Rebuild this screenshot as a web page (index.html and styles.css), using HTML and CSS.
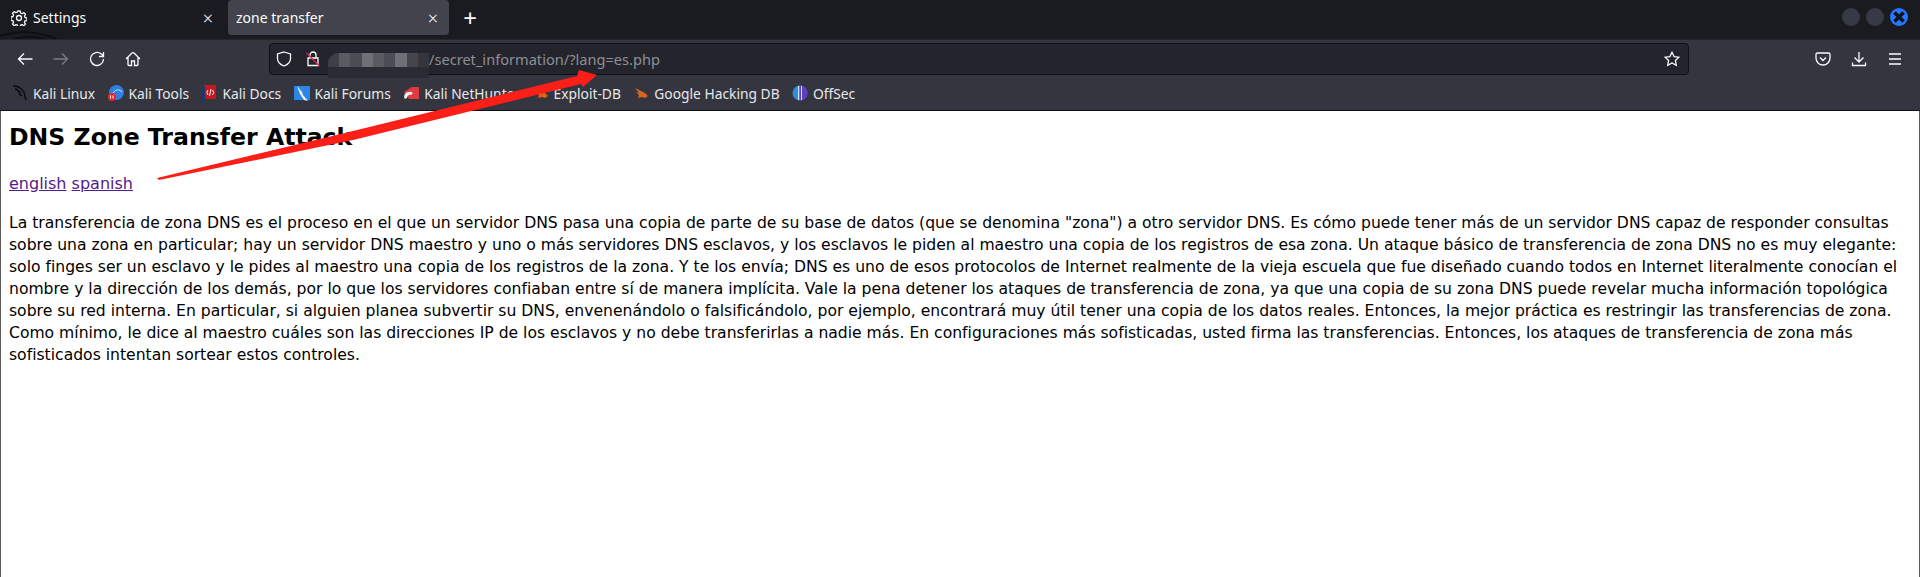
FILE: index.html
```html
<!DOCTYPE html>
<html lang="es">
<head>
    <meta charset="UTF-8">
    <title>zone transfer</title>
    <link rel="stylesheet" href="styles.css">
</head>
<body>
    <div class="tabbar">
        <svg class="wallpaper" viewBox="0 0 70 39"><path d="M0 36c20-6 38-5 56 3M14 39c10-3 20-3 30 0"/></svg>
        <div class="tab">
            <svg class="icon gear" viewBox="0 0 16 16"><path d="M6.800 1h2.400l.4 2 1.500.7 1.800-1.100 1.600 1.700-1.100 1.700.6 1.500 2 .5v2.400l-2 .4-.6 1.500 1.100 1.800-1.600 1.600-1.800-1.100-1.500.6-.4 2H6.800l-.4-2-1.500-.6-1.800 1.100-1.600-1.600 1.100-1.800-.6-1.500-2-.4V7l2-.5.6-1.500-1.100-1.700 1.600-1.700 1.800 1.100 1.500-.7z"/><circle cx="8" cy="8" r="2.500"/></svg>
            <span class="tab-title">Settings</span>
            <span class="tab-close">×</span>
        </div>
        <div class="tab active">
            <span class="tab-title">zone transfer</span>
            <span class="tab-close">×</span>
        </div>
        <span class="new-tab">+</span>
        <div class="win-buttons">
            <span class="win-btn"></span>
            <span class="win-btn"></span>
            <span class="win-btn close">
                <svg viewBox="0 0 10 10"><path d="M2.500 2.500l5 5M7.500 2.500l-5 5"/></svg>
            </span>
        </div>
    </div>

    <div class="toolbar">
        <svg class="icon nav" viewBox="0 0 16 16"><path d="M15.500 8H1M7 2.500L1.500 8 7 13.500"/></svg>
        <svg class="icon nav dim" viewBox="0 0 16 16"><path d="M.5 8H15M9 2.500L14.500 8 9 13.500"/></svg>
        <svg class="icon nav" viewBox="0 0 16 16"><path d="M14.500 8a6.500 6.500 0 1 1-2.200-4.900L14.500 5M14.500 1v4.500H10"/></svg>
        <svg class="icon nav" viewBox="0 0 16 16"><path d="M1 8l6-6a1.400 1.400 0 0 1 2 0l6 6M3 6.500v7a1 1 0 0 0 1 1h2.500V10h3v4.500H12a1 1 0 0 0 1-1v-7"/></svg>
        <div class="urlbar">
            <svg class="icon shield" viewBox="0 0 16 16"><path d="M8 1l6.500 2v4.500c0 3.500-2.500 6-6.500 7.500-4-1.500-6.500-4-6.500-7.500V3z"/></svg>
            <svg class="icon lock" viewBox="0 0 16 16"><path d="M5 7V4a3 3 0 0 1 6 0v3M3 7h10v7.500H3z"/><path class="slash" d="M1.500 2l13 13"/></svg>
            <div class="url-host"><div class="blur">
                <i></i><i></i><i></i><i></i><i></i><i></i><i></i><i></i><i></i>
            </div></div>
            <span class="url-text">/secret_information/?lang=es.php</span>
            <svg class="icon star" viewBox="0 0 16 16"><path d="M8 1.200l2.100 4.400 4.800.6-3.500 3.300.9 4.800L8 12l-4.300 2.300.9-4.800L1.100 6.200l4.800-.6z"/></svg>
        </div>
        <svg class="icon tool" viewBox="0 0 16 16"><path d="M2.500 2h11A1.500 1.500 0 0 1 15 3.500V7a7 7 0 0 1-14 0V3.500A1.500 1.500 0 0 1 2.500 2zM5 6.500L8 9.500l3-3"/></svg>
        <svg class="icon tool" viewBox="0 0 16 16"><path d="M8 1v10M3.500 6.500L8 11l4.500-4.500M1.500 11.500v3h13v-3"/></svg>
        <svg class="icon tool" viewBox="0 0 16 16"><path d="M2 3h12M2 8h12M2 13h12"/></svg>
    </div>

    <div class="bookmarks">
        <a class="bookmark">
            <svg class="fav" viewBox="0 0 16 16"><path class="dragon" d="M1 1c3 0 5 0 7 2 3 2 5 5 5 9l1 3M3 4c2 0 3 1 4 3M8 6c-1 2 0 4 2 5"/></svg>
            Kali Linux
        </a>
        <a class="bookmark">
            <svg class="fav" viewBox="0 0 16 16"><circle cx="8.500" cy="7.500" r="7.500" fill="#2f7fe0"/><path d="M5 8c3-4 6-4 9-1" stroke="#cfe4ff" fill="none"/><circle cx="4" cy="12" r="4" fill="#e8262a"/><path d="M2.500 10.500v3M5 10.500v3" stroke="#fff" fill="none"/></svg>
            Kali Tools
        </a>
        <a class="bookmark">
            <svg class="fav" viewBox="0 0 16 16"><rect x="3" width="12" height="14" fill="#c4161c"/><rect x="1" y="1" width="3" height="15" fill="#1c3a63"/><path d="M7 5L5.800 7.500 7 10M11.500 5l1.200 2.500-1.200 2.500M10 4L8.500 11" stroke="#fff" fill="none"/></svg>
            Kali Docs
        </a>
        <a class="bookmark">
            <svg class="fav" viewBox="0 0 16 16"><rect y="1" width="16" height="14" fill="#2a86e8"/><path d="M3 1l5 6 1 3 5 6-4-1-4-6z" fill="#f2f2f2"/></svg>
            Kali Forums
        </a>
        <a class="bookmark">
            <svg class="fav" viewBox="0 0 16 16"><path d="M1 7l8-5 7 0v12H6z" fill="#e13a3f"/><path d="M1 12a5.500 5.500 0 0 1 9-4l-2 2a3 3 0 0 0-4 3l-2 1z" fill="#eee"/></svg>
            Kali NetHunter
        </a>
        <a class="bookmark">
            <svg class="fav" viewBox="0 0 16 16"><path d="M2 3l4 2 6 3 3 3-3 2-3-1-4 1 1-3-3-3 3 1z" fill="#d9651d"/></svg>
            Exploit-DB
        </a>
        <a class="bookmark">
            <svg class="fav" viewBox="0 0 16 16"><path d="M2 3l4 2 6 3 3 3-3 2-3-1-4 1 1-3-3-3 3 1z" fill="#d9651d"/></svg>
            Google Hacking DB
        </a>
        <a class="bookmark">
            <svg class="fav" viewBox="0 0 16 16"><circle cx="8" cy="8" r="7.500" fill="#2f8fd8"/><path d="M8 .5a7.500 7.500 0 0 1 0 15z" fill="#5a3fc0"/><path d="M6.500 1v14M9.500 1v14" stroke="#c9e4f5" fill="none"/></svg>
            OffSec
        </a>
    </div>

    <main class="page">
        <h1>DNS Zone Transfer Attack</h1>
        <p class="langs"><a href="#">english</a> <a href="#">spanish</a></p>
        <p class="body-text">La transferencia de zona DNS es el proceso en el que un servidor DNS pasa una copia de parte de su base de datos (que se denomina "zona") a otro servidor DNS. Es cómo puede tener más de un servidor DNS capaz de responder consultas sobre una zona en particular; hay un servidor DNS maestro y uno o más servidores DNS esclavos, y los esclavos le piden al maestro una copia de los registros de esa zona. Un ataque básico de transferencia de zona DNS no es muy elegante: solo finges ser un esclavo y le pides al maestro una copia de los registros de la zona. Y te los envía; DNS es uno de esos protocolos de Internet realmente de la vieja escuela que fue diseñado cuando todos en Internet literalmente conocían el nombre y la dirección de los demás, por lo que los servidores confiaban entre sí de manera implícita. Vale la pena detener los ataques de transferencia de zona, ya que una copia de su zona DNS puede revelar mucha información topológica sobre su red interna. En particular, si alguien planea subvertir su DNS, envenenándolo o falsificándolo, por ejemplo, encontrará muy útil tener una copia de los datos reales. Entonces, la mejor práctica es restringir las transferencias de zona. Como mínimo, le dice al maestro cuáles son las direcciones IP de los esclavos y no debe transferirlas a nadie más. En configuraciones más sofisticadas, usted firma las transferencias. Entonces, los ataques de transferencia de zona más sofisticados intentan sortear estos controles.</p>
    </main>

    <!-- red annotation arrow drawn over the screenshot -->
    <svg class="arrow" viewBox="0 0 1920 577"><polygon points="157,178 353,131 577,76 579,70 597,75 583,87 581,84 353,140 159,180"/></svg>
</body>
</html>
```

FILE: styles.css
```css
* {
    box-sizing: border-box;
}
html, body {
    height: 100%;
}
body {
    margin: 0;
    display: flex;
    flex-direction: column;
    background: #fff;
    font-family: "Noto Sans", sans-serif;
    overflow: hidden;
}
.icon {
    width: 16px;
    height: 16px;
    flex: none;
    fill: none;
    stroke: #fbfbfe;
    stroke-width: 1.3;
}

/* tabs */
.tabbar {
    position: relative;
    height: 39px;
    flex: none;
    display: flex;
    align-items: flex-start;
    background: #1a1b20;
    padding: 0 12px 0 0;
    color: #fbfbfe;
    font-size: 14px;
}
.wallpaper {
    position: absolute;
    left: 0;
    top: 0;
    width: 70px;
    height: 39px;
    fill: none;
    stroke: #0e0f12;
    stroke-width: 2;
}
.tab {
    position: relative;
    width: 228px;
    height: 35px;
    display: flex;
    align-items: center;
    gap: 6px;
    padding: 0 15px 0 11px;
    border-radius: 4px;
}
.tab.active {
    width: 221px;
    background: #42434d;
    padding: 0 11px 0 8px;
}
.gear {
    stroke-linejoin: round;
}
.tab-title {
    flex: 1;
}
.tab-close {
    font-size: 18px;
    font-weight: 300;
}
.new-tab {
    margin-left: 7px;
    font-size: 24px;
    line-height: 35px;
    width: 28px;
    text-align: center;
}
.win-buttons {
    margin-left: auto;
    display: flex;
    gap: 6px;
    margin-top: 8px;
}
.win-btn {
    width: 18px;
    height: 18px;
    border-radius: 50%;
    background: #363a46;
    display: block;
}
.win-btn.close {
    background: #2777ff;
}
.win-btn svg {
    display: block;
    fill: none;
    stroke: #10131a;
    stroke-width: 2;
}

/* toolbar */
.toolbar {
    height: 39px;
    flex: none;
    display: flex;
    align-items: center;
    background: #34353e;
    padding: 0 17px;
    border-top: 1px solid #24252b;
}
.nav {
    margin-right: 20px;
}
.nav.dim {
    stroke: #7a7b83;
}
.urlbar {
    width: 1421px;
    height: 32px;
    margin-left: 108px;
    display: flex;
    align-items: center;
    padding: 0 8px 0 6px;
    background: #23242c;
    border: 1px solid #0f1014;
    border-radius: 4px;
    font-size: 14.6px;
    color: #8e8f96;
}
.lock {
    margin-left: 13px;
    margin-right: 7px;
}
.lock .slash {
    stroke: #e22850;
}
.url-host {
    width: 101px;
    height: 33px;
    align-self: flex-start;
    margin-top: 9px;
    background: #2b2c33;
    border-radius: 10px 0 12px 12px;
    overflow: hidden;
    flex: none;
}
.blur {
    display: flex;
    height: 14px;
}
.blur i {
    flex: 1;
    background: #4c4d54;
}
.blur i:nth-child(1) {
    background: #3f4047;
}
.blur i:nth-child(2), .blur i:nth-child(5) {
    background: #5a5b61;
}
.blur i:nth-child(4), .blur i:nth-child(7) {
    background: #6f7076;
}
.blur i:nth-child(8) {
    background: #45464d;
}
.blur i:nth-child(9) {
    background: #35363d;
}
.url-text {
    flex: 1;
}
.tool {
    margin-left: 20px;
}
.urlbar + .tool {
    margin-left: 126px;
}

/* bookmarks */
.bookmarks {
    height: 33px;
    flex: none;
    display: flex;
    align-items: center;
    gap: 12.4px;
    background: #34353e;
    padding: 0 12px 2px;
    border-bottom: 1px solid #0f1014;
    color: #e8e8ec;
    font-size: 13.8px;
}
.bookmark {
    display: flex;
    align-items: center;
    gap: 5px;
}
.fav {
    width: 16px;
    height: 16px;
    flex: none;
}
.dragon {
    fill: none;
    stroke: #0b0b0e;
    stroke-width: 1.4;
}

/* page content */
.page {
    flex: 1;
    padding: 12px 8px 0;
    border: solid #5c5c5c;
    border-width: 0 1px;
    color: #000;
    font-family: "DejaVu Sans", sans-serif;
    font-size: 15.6px;
    line-height: 22px;
}
h1 {
    margin: 0;
    font-size: 23.6px;
    line-height: 28px;
}
.langs {
    margin: 22px 0 0;
    font-size: 16px;
}
.langs a {
    color: #551a8b;
}
.body-text {
    margin: 17px 0 0;
}
.arrow {
    position: absolute;
    left: 0;
    top: 0;
    width: 1920px;
    height: 577px;
    pointer-events: none;
}
.arrow polygon {
    fill: #fb1f18;
}
```
